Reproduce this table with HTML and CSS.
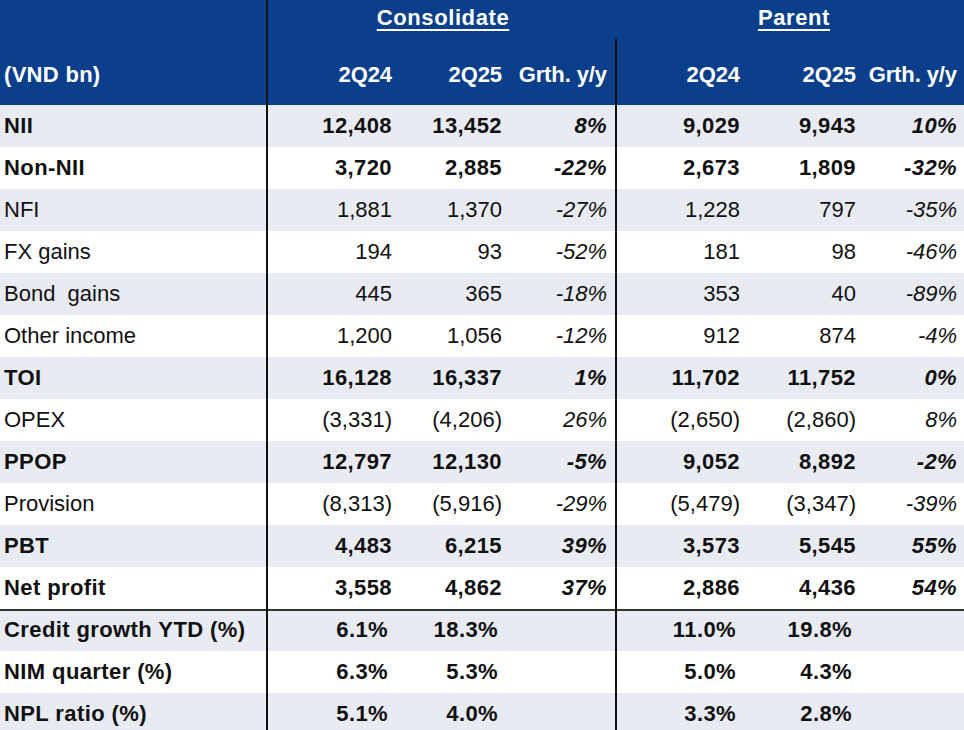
FILE: index.html
```html
<!DOCTYPE html>
<html>
<head>
<meta charset="utf-8">
<link rel="stylesheet" href="styles.css">
</head>
<body>
<div class="table">
  <div class="head">
    <div class="hlabel">(VND bn)</div>
    <div class="group g1"><span>Consolidate</span></div>
    <div class="group g2"><span>Parent</span></div>
    <div class="hc">2Q24</div>
    <div class="hc">2Q25</div>
    <div class="hc sep">Grth. y/y</div>
    <div class="hc">2Q24</div>
    <div class="hc">2Q25</div>
    <div class="hc last">Grth. y/y</div>
  </div>

  <div class="row alt bold"><div class="lab">NII</div><div class="c">12,408</div><div class="c">13,452</div><div class="c p sep">8%</div><div class="c">9,029</div><div class="c">9,943</div><div class="c p last">10%</div></div>
  <div class="row bold"><div class="lab">Non-NII</div><div class="c">3,720</div><div class="c">2,885</div><div class="c p sep">-22%</div><div class="c">2,673</div><div class="c">1,809</div><div class="c p last">-32%</div></div>
  <div class="row alt"><div class="lab">NFI</div><div class="c">1,881</div><div class="c">1,370</div><div class="c p sep">-27%</div><div class="c">1,228</div><div class="c">797</div><div class="c p last">-35%</div></div>
  <div class="row"><div class="lab">FX gains</div><div class="c">194</div><div class="c">93</div><div class="c p sep">-52%</div><div class="c">181</div><div class="c">98</div><div class="c p last">-46%</div></div>
  <div class="row alt"><div class="lab">Bond&nbsp; gains</div><div class="c">445</div><div class="c">365</div><div class="c p sep">-18%</div><div class="c">353</div><div class="c">40</div><div class="c p last">-89%</div></div>
  <div class="row"><div class="lab">Other income</div><div class="c">1,200</div><div class="c">1,056</div><div class="c p sep">-12%</div><div class="c">912</div><div class="c">874</div><div class="c p last">-4%</div></div>
  <div class="row alt bold"><div class="lab">TOI</div><div class="c">16,128</div><div class="c">16,337</div><div class="c p sep">1%</div><div class="c">11,702</div><div class="c">11,752</div><div class="c p last">0%</div></div>
  <div class="row"><div class="lab">OPEX</div><div class="c">(3,331)</div><div class="c">(4,206)</div><div class="c p sep">26%</div><div class="c">(2,650)</div><div class="c">(2,860)</div><div class="c p last">8%</div></div>
  <div class="row alt bold"><div class="lab">PPOP</div><div class="c">12,797</div><div class="c">12,130</div><div class="c p sep">-5%</div><div class="c">9,052</div><div class="c">8,892</div><div class="c p last">-2%</div></div>
  <div class="row"><div class="lab">Provision</div><div class="c">(8,313)</div><div class="c">(5,916)</div><div class="c p sep">-29%</div><div class="c">(5,479)</div><div class="c">(3,347)</div><div class="c p last">-39%</div></div>
  <div class="row alt bold"><div class="lab">PBT</div><div class="c">4,483</div><div class="c">6,215</div><div class="c p sep">39%</div><div class="c">3,573</div><div class="c">5,545</div><div class="c p last">55%</div></div>
  <div class="row bold"><div class="lab">Net profit</div><div class="c">3,558</div><div class="c">4,862</div><div class="c p sep">37%</div><div class="c">2,886</div><div class="c">4,436</div><div class="c p last">54%</div></div>
  <div class="row alt bold ratio topline"><div class="lab">Credit growth YTD (%)</div><div class="c">6.1%</div><div class="c">18.3%</div><div class="c sep"></div><div class="c">11.0%</div><div class="c">19.8%</div><div class="c last"></div></div>
  <div class="row bold ratio"><div class="lab">NIM quarter (%)</div><div class="c">6.3%</div><div class="c">5.3%</div><div class="c sep"></div><div class="c">5.0%</div><div class="c">4.3%</div><div class="c last"></div></div>
  <div class="row alt bold ratio"><div class="lab">NPL ratio (%)</div><div class="c">5.1%</div><div class="c">4.0%</div><div class="c sep"></div><div class="c">3.3%</div><div class="c">2.8%</div><div class="c last"></div></div>
</div>
</body>
</html>
```

FILE: styles.css
```css
html, body {
  margin: 0;
  padding: 0;
  background: #ffffff;
}
body {
  width: 964px;
  height: 730px;
  overflow: hidden;
  font-family: "Liberation Sans", Arial, sans-serif;
  color: #111111;
}
.table {
  width: 964px;
}
.head {
  display: grid;
  grid-template-columns: 268px 132px 110px 107px 131px 116px 100px;
  grid-template-rows: 39px 66px;
  background: #0b3f8b;
  color: #ffffff;
  font-weight: bold;
  font-size: 22px;
}
.hlabel {
  grid-row: 1 / span 2;
  grid-column: 1;
  border-right: 2px solid #111111;
  display: flex;
  align-items: center;
  padding: 45px 0 0 4px;
  box-sizing: border-box;
  letter-spacing: 0.3px;
}
.group {
  display: flex;
  justify-content: center;
  align-items: center;
  letter-spacing: 0.6px;
  padding-bottom: 3px;
}
.group span {
  text-decoration: underline;
  text-decoration-thickness: 2px;
  text-underline-offset: 4px;
}
.g1 {
  grid-row: 1;
  grid-column: 2 / span 3;
  padding-left: 1px;
}
.g2 {
  grid-row: 1;
  grid-column: 5 / span 3;
  padding-left: 7px;
}
.hc {
  grid-row: 2;
  display: flex;
  align-items: center;
  justify-content: flex-end;
  padding: 6px 8px 0 0;
  white-space: nowrap;
  letter-spacing: -0.1px;
}
.hc.last {
  padding-right: 7px;
}
.sep {
  border-right: 2px solid #111111;
}
.row {
  display: grid;
  grid-template-columns: 268px 132px 110px 107px 131px 116px 100px;
  height: 42px;
  font-size: 22px;
  background: #ffffff;
}
.row.alt {
  background: #e9ebf3;
}
.row.bold {
  font-weight: bold;
  letter-spacing: 0.4px;
}
.row.topline {
  box-shadow: inset 0 2px 0 #333333;
}
.lab {
  border-right: 2px solid #111111;
  display: flex;
  align-items: center;
  padding-left: 4px;
  white-space: nowrap;
}
.c {
  display: flex;
  align-items: center;
  justify-content: flex-end;
  padding-right: 8px;
  white-space: nowrap;
}
.c.last {
  padding-right: 7px;
}
.c.p {
  font-style: italic;
}
.ratio .c {
  padding-right: 12px;
}
```
